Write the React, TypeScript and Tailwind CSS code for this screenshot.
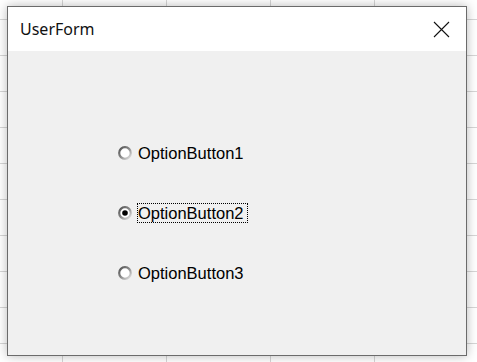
function Radio({ checked }: { checked?: boolean }) {
  return (
    <svg width="14" height="14" viewBox="0 0 14 14" className="shrink-0">
      <defs>
        <linearGradient id="rg" x1="0" y1="0" x2="1" y2="1">
          <stop offset="0" stopColor="#505050" />
          <stop offset="0.5" stopColor="#8a8a8a" />
          <stop offset="1" stopColor="#e8e8e8" />
        </linearGradient>
      </defs>
      <circle cx="7" cy="7" r="5.8" fill="#ffffff" stroke="url(#rg)" strokeWidth="2.2" />
      {checked && <circle cx="7" cy="7" r="2.8" fill="#000000" />}
    </svg>
  );
}

function Option({ label, checked }: { label: string; checked?: boolean }) {
  return (
    <div className="flex h-[20px] items-center">
      <Radio checked={checked} />
      <span
        className={
          'ml-[5px] flex h-[20px] items-center pr-[3px] text-[16.5px] leading-none text-black ' +
          (checked ? 'border border-dotted border-black' : 'border border-transparent')
        }
      >
        {label}
      </span>
    </div>
  );
}

export default function App() {
  return (
    <div
      className="relative h-[362px] w-[477px] overflow-hidden bg-white bg-[linear-gradient(to_right,#d6d6d6_1px,transparent_1px),linear-gradient(to_bottom,#d6d6d6_1px,transparent_1px)] bg-[size:104px_36px] bg-[position:62px_19px] pt-[6px] pl-[7px]"
      style={{ fontFamily: '"Liberation Sans", Arial, sans-serif' }}
    >
      <div className="flex h-[350px] w-[460px] flex-col border border-[#6b6b6b] bg-[#f0f0f0] shadow-[0_0_10px_rgba(0,0,0,0.28)]">
        <div className="flex h-[44px] items-center justify-between bg-white pl-[12px] pr-[16px]">
          <span className="text-[16px] text-[#111]" style={{ fontFamily: '"Noto Sans", "Open Sans", sans-serif' }}>
            UserForm
          </span>
          <svg width="17" height="17" viewBox="0 0 17 17">
            <path d="M1 1L16 16M16 1L1 16" stroke="#111" strokeWidth="1.1" fill="none" />
          </svg>
        </div>
        <div className="flex flex-1 flex-col gap-[40px] pt-[92px] pl-[110px]">
          <Option label="OptionButton1" />
          <Option label="OptionButton2" checked />
          <Option label="OptionButton3" />
        </div>
      </div>
    </div>
  );
}
